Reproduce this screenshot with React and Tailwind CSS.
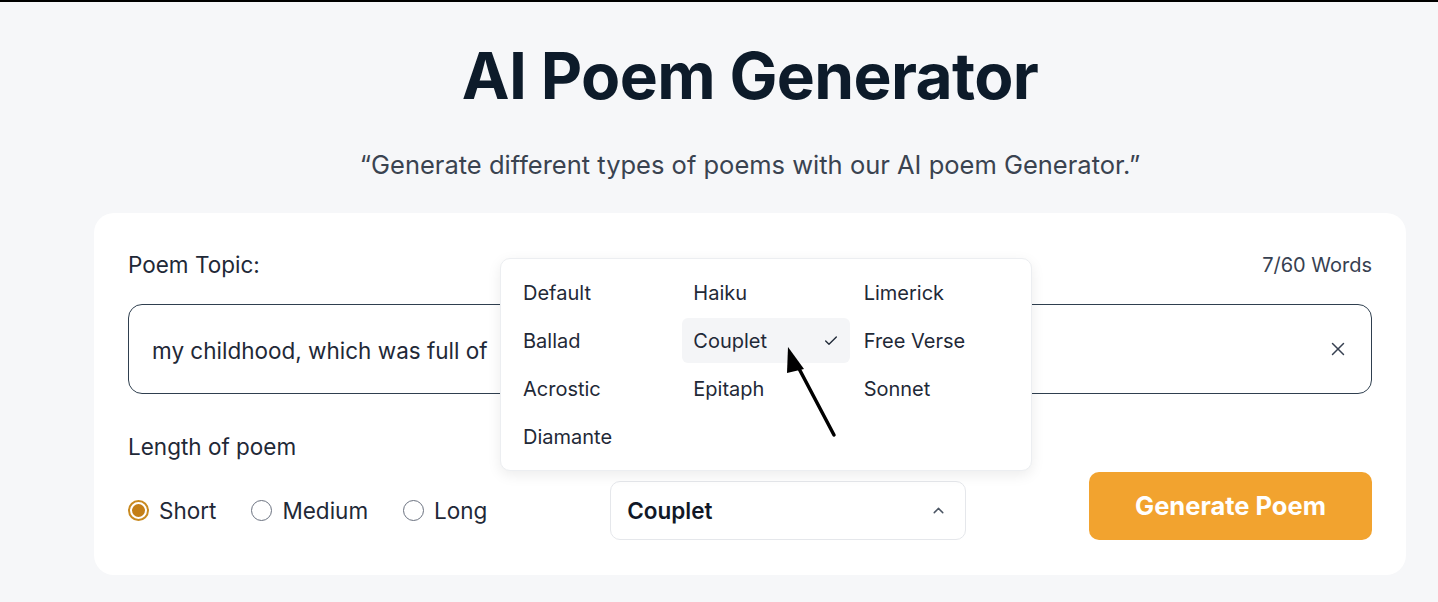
import React, { useState } from 'react';
import { X, Check, ChevronUp } from 'lucide-react';

const poemTypes = [
  'Default', 'Haiku', 'Limerick',
  'Ballad', 'Couplet', 'Free Verse',
  'Acrostic', 'Epitaph', 'Sonnet',
  'Diamante',
];

const lengths = ['Short', 'Medium', 'Long'];

export default function App() {
  const [topic, setTopic] = useState('my childhood, which was full of');
  const [length, setLength] = useState('Short');
  const [type, setType] = useState('Couplet');

  return (
    <div
      className="min-h-screen bg-[#f6f7f9] border-t-2 border-black pl-[94px] pr-[32px]"
      style={{ fontFamily: 'Inter, "Noto Sans", sans-serif' }}
    >
      {/* Заголовок */}
      <h1 className="mt-[36px] text-center text-[64px] leading-[76px] font-bold tracking-[-0.01em] text-[#0d1b2a]">
        AI Poem Generator
      </h1>
      <p className="mt-[36px] text-center text-[25.5px] leading-[30px] text-[#3a4350]">
        “Generate different types of poems with our AI poem Generator.”
      </p>

      {/* Карточка формы */}
      <div className="relative mt-[33px] bg-white rounded-[20px] pt-[38px] pb-[35px] px-[34px]">
        <div className="flex items-center justify-between h-[28px]">
          <span className="text-[22.5px] text-[#1f2937]">Poem Topic:</span>
          <span className="text-[20px] text-[#374151]">7/60 Words</span>
        </div>

        <div className="mt-[25px] h-[90px] flex items-center border-[1.5px] border-[#2f3f4f] rounded-[14px] pl-[23px] pr-[22px]">
          <input
            value={topic}
            onChange={(e) => setTopic(e.target.value)}
            className="flex-1 bg-transparent outline-none text-[22.5px] text-[#1f2937] pt-[3px]"
          />
          <X className="w-[22px] h-[22px] text-[#374151]" strokeWidth={1.6} />
        </div>

        <p className="mt-[39px] text-[22.5px] leading-[28px] text-[#1f2937]">Length of poem</p>

        <div className="mt-[11px] flex items-end justify-between">
          <div className="h-[59px] flex items-center">
            {lengths.map((l, i) => (
              <label
                key={l}
                onClick={() => setLength(l)}
                className={`flex items-center gap-[10px] cursor-pointer ${i > 0 ? 'ml-[35px]' : ''}`}
              >
                {length === l ? (
                  <span className="w-[21px] h-[21px] rounded-full border-2 border-[#c98a20] flex items-center justify-center">
                    <span className="w-[13px] h-[13px] rounded-full bg-[#c47f17]" />
                  </span>
                ) : (
                  <span className="w-[21px] h-[21px] rounded-full border-[1.5px] border-[#6b7280]" />
                )}
                <span className="text-[22.5px] text-[#1f2937]">{l}</span>
              </label>
            ))}
          </div>

          <button className="w-[356px] h-[59px] flex items-center justify-between border border-[#e5e7eb] rounded-[10px] pl-[16px] pr-[18px] bg-white">
            <span className="text-[22.5px] font-semibold text-[#111827]">{type}</span>
            <ChevronUp className="w-[17px] h-[17px] text-[#4b5563]" strokeWidth={2} />
          </button>

          <button className="w-[283px] h-[68px] rounded-[10px] bg-[#f2a32f] text-white text-[25.5px] font-bold">
            Generate Poem
          </button>
        </div>

        {/* Выпадающий список типов */}
        <div className="absolute left-[406px] top-[45px] w-[532px] bg-white border border-[#eceef1] rounded-[10px] shadow-[0_4px_14px_rgba(0,0,0,0.08)] p-[11px]">
          <div className="grid grid-cols-3 gap-x-[3px] gap-y-[3px]">
            {poemTypes.map((t) => (
              <div
                key={t}
                onClick={() => setType(t)}
                className={`h-[45px] flex items-center justify-between px-[11px] rounded-[6px] cursor-pointer ${type === t ? 'bg-[#f4f5f7]' : ''}`}
              >
                <span className="text-[20px] text-[#1f2937]">{t}</span>
                {type === t && <Check className="w-[16px] h-[16px] text-[#1f2937]" strokeWidth={2} />}
              </div>
            ))}
          </div>
        </div>

        {/* Стрелка-указатель */}
        <svg className="absolute left-[684px] top-[128px] w-[60px] h-[100px]" viewBox="0 0 60 100">
          <line x1="56" y1="94" x2="17" y2="20" stroke="#000" strokeWidth="3.5" strokeLinecap="round" />
          <polygon points="10,6 26,28 9,32" fill="#000" />
        </svg>
      </div>
    </div>
  );
}
